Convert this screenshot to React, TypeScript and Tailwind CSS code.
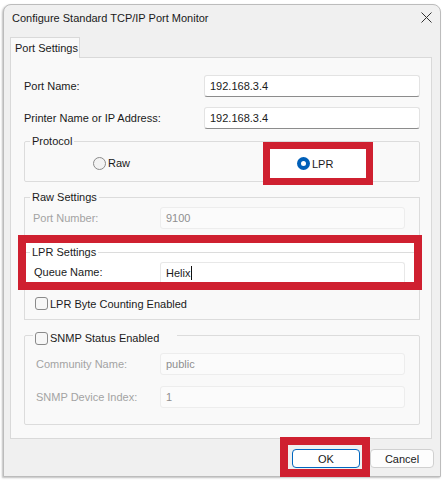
import React from "react";

function Radio({ checked }: { checked?: boolean }) {
  return checked ? (
    <span className="inline-flex w-[13px] h-[13px] shrink-0 rounded-full bg-[#005fb8] items-center justify-center">
      <span className="w-[5px] h-[5px] rounded-full bg-white" />
    </span>
  ) : (
    <span className="inline-block w-[13px] h-[13px] shrink-0 rounded-full border border-[#8a8a8a] bg-[#f3f3f3]" />
  );
}

function Check() {
  return <span className="inline-block w-[13px] h-[13px] shrink-0 rounded-[3px] border border-[#8a8a8a] bg-[#f7f7f7]" />;
}

function ActiveInput({ value }: { value: string }) {
  return (
    <div className="w-[216px] h-[22px] bg-white border border-[#e3e3e3] border-b-[#8c8c8c] rounded-[3px] pl-[5px] flex items-center text-[#1a1a1a]">
      {value}
    </div>
  );
}

function DisabledInput({ value }: { value: string }) {
  return (
    <div className="w-[245px] h-[22px] bg-[#fbfbfb] border border-[#ededed] rounded-[3px] pl-[5px] flex items-center text-[#8f8f8f]">
      {value}
    </div>
  );
}

export default function App() {
  return (
    <div className="w-[447px] h-[485px] bg-white pt-[4px] pl-[3px] font-['Liberation_Sans',sans-serif] text-[11px] text-[#1a1a1a] leading-[16px]">
      <div className="w-[438px] h-[473px] border border-[#bcbcbc] rounded-t-[8px] bg-[#f0f0f0] flex flex-col shadow-[-1px_1px_2px_rgba(0,0,0,0.25)]">
        {/* title bar */}
        <div className="h-[25px] flex items-center justify-between pl-[8px] pr-[8px] shrink-0">
          <span className="text-[#1a1a1a]">Configure Standard TCP/IP Port Monitor</span>
          <svg width="11" height="11" viewBox="0 0 11 11" className="mt-[-1px]">
            <path d="M0.5 0.5 L10.5 10.5 M10.5 0.5 L0.5 10.5" stroke="#333" strokeWidth="1" fill="none" />
          </svg>
        </div>

        {/* tab */}
        <div className="mt-[7px] ml-[6px] w-[70px] h-[21px] border border-b-0 border-[#d9d9d9] bg-[#f9f9f9] relative z-10 pl-[4px] flex items-center shrink-0">
          Port Settings
        </div>

        {/* panel */}
        <div className="-mt-[1px] ml-[6px] w-[422px] h-[382px] border border-[#d9d9d9] bg-[#f9f9f9] flex flex-col shrink-0">
          <div className="mt-[17px] h-[22px] pl-[13px] flex items-center">
            <span className="w-[180px]">Port Name:</span>
            <ActiveInput value="192.168.3.4" />
          </div>
          <div className="mt-[10px] h-[22px] pl-[13px] flex items-center">
            <span className="w-[180px]">Printer Name or IP Address:</span>
            <ActiveInput value="192.168.3.4" />
          </div>

          {/* Protocol */}
          <div className="mt-[12px] ml-[13px] w-[396px] h-[41px] border border-[#dcdcdc] rounded-[2px]">
            <div className="-mt-[9px] -mb-[7px] h-[16px] ml-[5px] px-[2px] w-fit bg-[#f9f9f9]">Protocol</div>
            <div className="flex items-start">
              <div className="w-[238px] pl-[68px] pt-[13px] flex items-center gap-[2px]">
                <Radio />
                <span>Raw</span>
              </div>
              <div className="w-[110px] h-[43px] border-[7px] border-[#cf2030] bg-white pl-[27px] flex items-center gap-[2px]">
                <Radio checked />
                <span>LPR</span>
              </div>
            </div>
          </div>

          {/* Raw Settings */}
          <div className="mt-[15px] ml-[13px] w-[396px] h-[38px] border border-b-0 border-[#dcdcdc]">
            <div className="-mt-[9px] -mb-[7px] h-[16px] ml-[5px] px-[2px] w-fit bg-[#f9f9f9]">Raw Settings</div>
            <div className="mt-[9px] h-[22px] pl-[8px] flex items-center">
              <span className="w-[127px] text-[#a3a3a3]">Port Number:</span>
              <DisabledInput value="9100" />
            </div>
          </div>

          {/* LPR highlighted */}
          <div className="ml-[7px] w-[404px] h-[55px] border-[8px] border-[#cf2030] bg-white">
            <div className="mt-[9px] border-t border-[#dcdcdc]">
              <div className="-mt-[9px] -mb-[7px] h-[16px] ml-[4px] px-[2px] w-fit bg-white">LPR Settings</div>
              <div className="mt-[9px] h-[20px] pl-[8px] flex items-center">
                <span className="w-[126px]">Queue Name:</span>
                <div className="w-[245px] h-[20px] bg-white border border-b-0 border-[#e8e8e8] rounded-t-[3px] pl-[5px] flex items-center">
                  <span>Helix</span>
                  <span className="inline-block w-[1px] h-[14px] bg-[#111] ml-[1px]" />
                </div>
              </div>
            </div>
          </div>
          <div className="ml-[13px] w-[396px] h-[30px] border border-t-0 border-[#dcdcdc] pt-[7px] pl-[10px]">
            <div className="flex items-center gap-[2px] h-[13px]">
              <Check />
              <span>LPR Byte Counting Enabled</span>
            </div>
          </div>

          {/* SNMP */}
          <div className="mt-[15px] ml-[13px] w-[396px] h-[90px] border border-[#dcdcdc] rounded-[2px]">
            <div className="-mt-[6px] -mb-[10px] h-[16px] ml-[8px] pl-[2px] pr-[18px] w-fit bg-[#f9f9f9] flex items-center gap-[2px]">
              <Check />
              <span>SNMP Status Enabled</span>
            </div>
            <div className="mt-[17px] h-[22px] pl-[11px] flex items-center">
              <span className="w-[124px] text-[#a3a3a3]">Community Name:</span>
              <DisabledInput value="public" />
            </div>
            <div className="mt-[11px] h-[22px] pl-[11px] flex items-center">
              <span className="w-[124px] text-[#a3a3a3]">SNMP Device Index:</span>
              <DisabledInput value="1" />
            </div>
          </div>
        </div>

        {/* buttons */}
        <div className="-mt-[2px] flex justify-end items-start pr-[6px]">
          <div className="w-[90px] h-[40px] border-[8px] border-[#cf2030] pl-[4px] pt-[4px] -mb-[1px] relative z-10">
            <div className="w-[68px] h-[19px] rounded-[4px] border border-[#0067c0] bg-white flex items-center justify-center">OK</div>
          </div>
          <div className="mt-[12px] w-[64px] h-[19px] rounded-[4px] border border-[#d0d0d0] bg-[#fdfdfd] flex items-center justify-center">Cancel</div>
        </div>
      </div>
    </div>
  );
}
